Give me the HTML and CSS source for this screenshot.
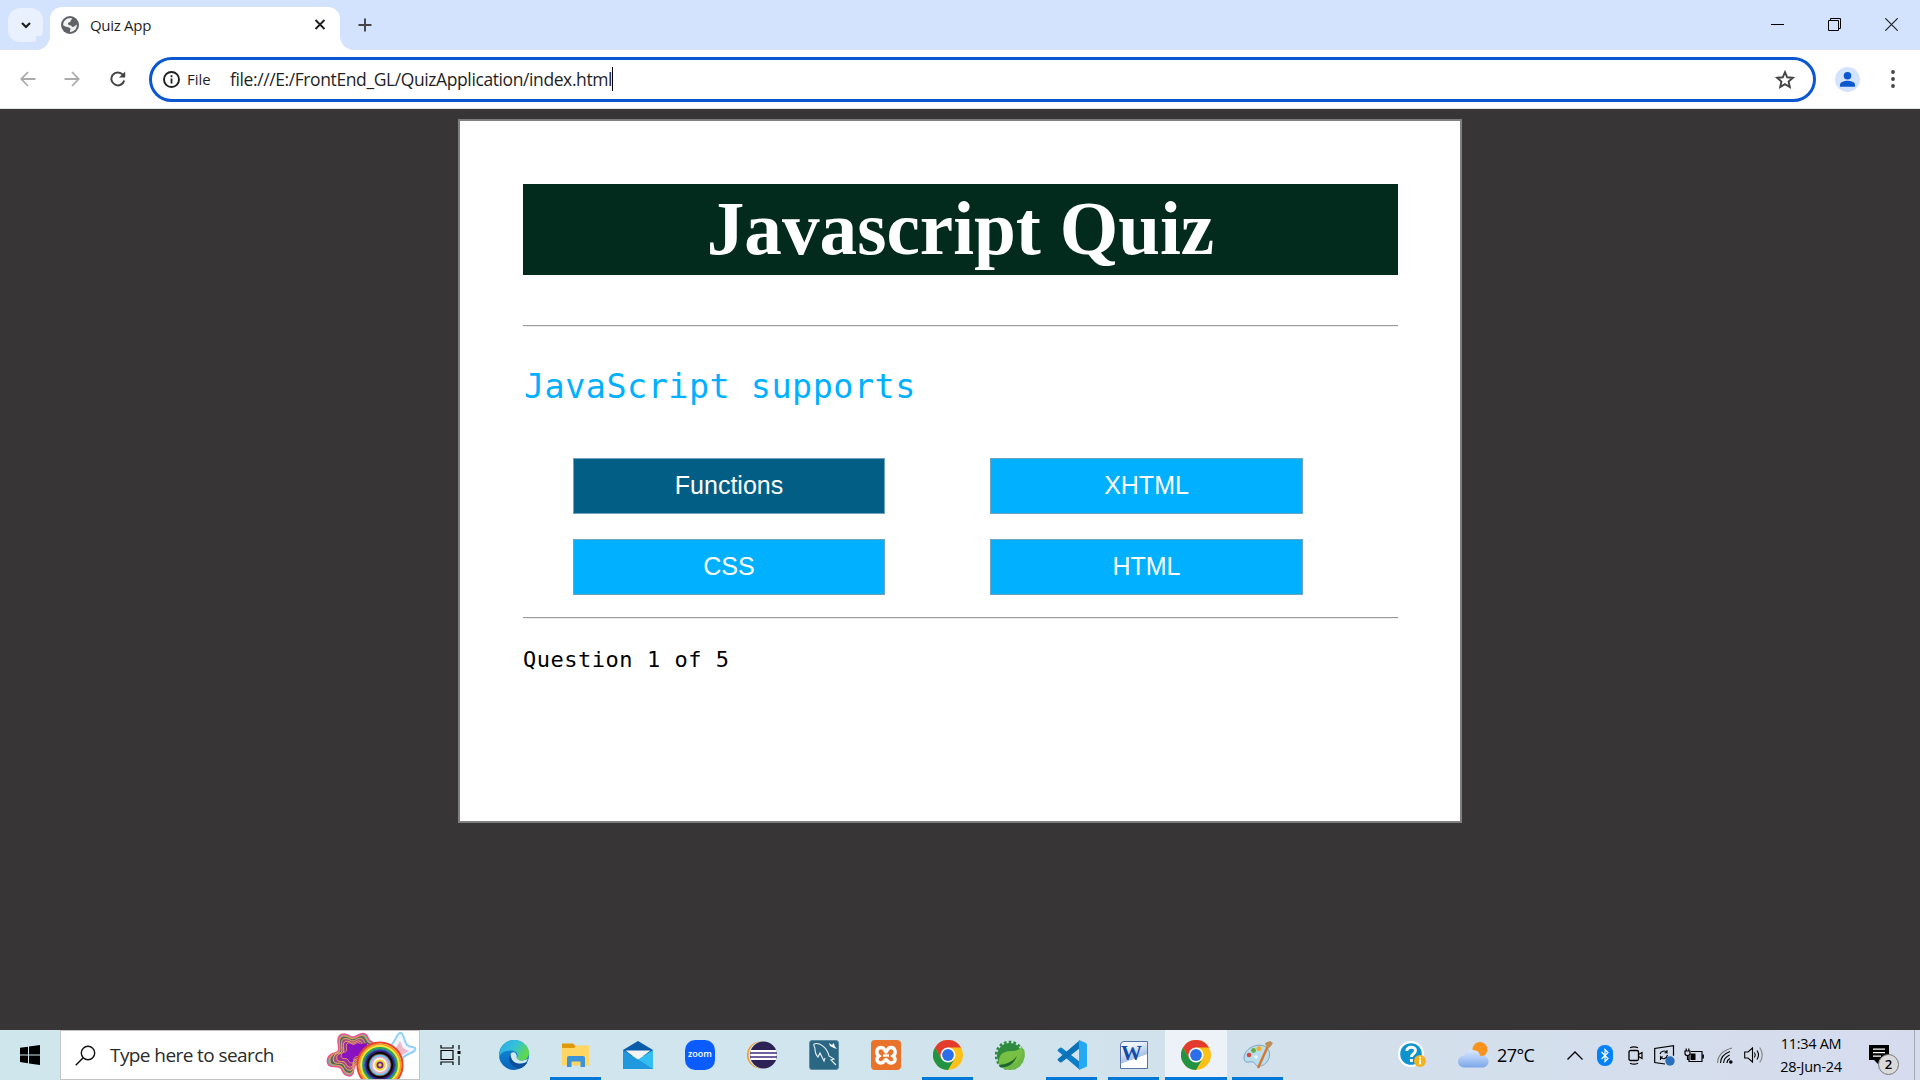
FILE: index.html
```html
<!DOCTYPE html>
<html lang="en">
<head>
<meta charset="utf-8">
<title>Quiz App</title>
<link rel="stylesheet" href="styles.css">
</head>
<body>
<svg class="defs" aria-hidden="true">
  <defs>
    <symbol id="chrome" viewBox="0 0 30 30">
      <circle cx="15" cy="15" r="15" fill="#fbc116"/>
      <path d="M2 7.500A15 15 0 0 1 28 7.500H15L8.500 18.750Z" fill="#e33b2e"/>
      <path d="M2 7.500A15 15 0 0 0 15 30L21.500 18.750H8.500Z" fill="#229342"/>
      <circle cx="15" cy="15" r="7.500" fill="#fff"/>
      <circle cx="15" cy="15" r="5.900" fill="#2b6fe8"/>
    </symbol>
    <path id="blob" d="M19 2C24 2 25 6 29 5S36 0 40 2 42 8 47 10 50 25 38 29 30 36 28 41 19 44 17 38 5 37 3 32 4 22 10 21 13 14 13 9 15 2 19 2Z"/>
    <linearGradient id="edgeA" x1="0" y1="0" x2="1" y2="0.500"><stop offset="0" stop-color="#2aa8e8"/><stop offset="0.550" stop-color="#35c1d8"/><stop offset="1" stop-color="#5fd84a"/></linearGradient>
    <linearGradient id="edgeB" x1="0" y1="0" x2="0" y2="1"><stop offset="0" stop-color="#1193e0"/><stop offset="1" stop-color="#0a63b8"/></linearGradient>
    <linearGradient id="cloud" x1="0" y1="0" x2="0" y2="1"><stop offset="0" stop-color="#d9e8ff"/><stop offset="1" stop-color="#7ba6ea"/></linearGradient>
  </defs>
</svg>

<header class="tabstrip">
  <div class="tab-search"><svg width="12" height="12" viewBox="0 0 12 12"><path d="M2 4l4 4 4-4" fill="none" stroke="#1f1f1f" stroke-width="2.200"/></svg></div>
  <div class="tab">
    <svg class="globe" width="18" height="18" viewBox="0 0 18 18"><circle cx="9" cy="9" r="9" fill="#5f6368"/><path d="M10.500 2c1 2-1 2-1 3.200S6.500 6 7 8s3 .6 3.600 2.300S14 10 15.800 8.500c.2 4.200-2.500 7.300-6.800 7.400-.6-1.400 1.300-2.300.2-3.700C8 11 5 11.300 2.200 9.200 1.900 5 5.500 1.600 10.500 2z" fill="#fff" opacity=".92"/></svg>
    <span class="tab-title">Quiz App</span>
    <svg class="tab-close" width="12" height="12" viewBox="0 0 12 12"><path d="M1.500 1l9 9m0-9l-9 9" stroke="#1f1f1f" stroke-width="1.900"/></svg>
  </div>
  <svg class="new-tab" width="14" height="14" viewBox="0 0 14 14"><path d="M7 .5v13M.5 7h13" stroke="#444" stroke-width="1.900"/></svg>
  <div class="win-controls">
    <svg width="13" height="13" viewBox="0 0 13 13"><path d="M0 6.500h13" stroke="#000"/></svg>
    <svg width="13" height="13" viewBox="0 0 13 13"><path d="M.5 2.500h10v10H.5zM2.500 2.500v-2h10v10h-2" fill="none" stroke="#000"/></svg>
    <svg width="13" height="13" viewBox="0 0 13 13"><path d="M.3.3l12.400 12.400M12.700.3L.3 12.700" stroke="#222" stroke-width="1.200"/></svg>
  </div>
</header>

<nav class="toolbar">
  <svg class="nav-back" width="16" height="16" viewBox="0 0 16 16"><path d="M15.500 8H1.800M8 1L1.300 8 8 15" fill="none" stroke="#ababab" stroke-width="1.800"/></svg>
  <svg class="nav-fwd" width="16" height="16" viewBox="0 0 16 16"><path d="M.5 8h13.700M8 1l6.700 7L8 15" fill="none" stroke="#ababab" stroke-width="1.800"/></svg>
  <svg class="nav-reload" width="16" height="16" viewBox="0 0 16 16"><path d="M14.200 9.500A6.500 6.500 0 1 1 12.800 3.600L14.500 5.600" fill="none" stroke="#444" stroke-width="2"/><path d="M15.200.4v6.200H9z" fill="#444"/></svg>
  <div class="omnibox">
    <svg width="17" height="17" viewBox="0 0 17 17"><circle cx="8.500" cy="8.500" r="7.500" fill="none" stroke="#1f1f1f" stroke-width="1.900"/><path d="M8.500 7.500v5M8.500 4.300v1.900" stroke="#1f1f1f" stroke-width="1.800"/></svg>
    <span class="scheme">File</span>
    <span class="url">file:///E:/FrontEnd_GL/QuizApplication/index.html</span>
    <i class="caret"></i>
    <svg class="star" width="20" height="19" viewBox="0 0 20 19"><path d="M10 2.200l2.200 5.100 5.600.5-4.200 3.700 1.200 5.500-4.800-2.900L5.200 17l1.200-5.500-4.200-3.700 5.600-.5z" fill="none" stroke="#444" stroke-width="1.900"/></svg>
  </div>
  <svg class="avatar" width="25" height="25" viewBox="0 0 25 25"><circle cx="12.500" cy="12.500" r="12.500" fill="#d3e3fd"/><circle cx="12.500" cy="8.700" r="3.800" fill="#0b57d0"/><path d="M5 19.800v-2.100c0-3 5-4 7.500-4s7.500 1 7.500 4v2.100z" fill="#0b57d0"/></svg>
  <svg class="menu" width="4" height="18" viewBox="0 0 4 18"><g fill="#444"><circle cx="2" cy="2" r="1.900"/><circle cx="2" cy="9" r="1.900"/><circle cx="2" cy="16" r="1.900"/></g></svg>
</nav>

<main class="page">
  <section class="quiz">
    <h1>Javascript Quiz</h1>
    <hr class="rule-top">
    <p class="question">JavaScript supports</p>
    <div class="options">
      <button class="hovered">Functions</button>
      <button>XHTML</button>
      <button>CSS</button>
      <button>HTML</button>
    </div>
    <hr class="rule-bottom">
    <p class="progress">Question 1 of 5</p>
  </section>
</main>

<footer class="taskbar">
  <div class="start"><svg width="20" height="20" viewBox="0 0 20 20"><path d="M0 2.800l8-1.100v7.700H0zM9 1.500L20 0v9.400H9zM0 10.400h8v7.800l-8-1.100zM9 10.400h11V20L9 18.400z"/></svg></div>
  <div class="search">
    <svg width="21" height="21" viewBox="0 0 21 21"><circle cx="13" cy="8" r="6.700" fill="none" stroke="#111" stroke-width="1.400"/><path d="M8.200 12.800L.7 20.300" stroke="#111" stroke-width="1.500"/></svg>
    <span>Type here to search</span>
    <svg class="search-art" width="92" height="47" viewBox="0 0 92 47">
      <use href="#blob" fill="#55b8b5" stroke="#f0508f" stroke-width="1.500"/>
      <use href="#blob" transform="translate(27 21) scale(.9) translate(-27 -21)" fill="#4c6b5e" stroke="#ec9a52" stroke-width="1.200"/>
      <use href="#blob" transform="translate(27 21) scale(.76) translate(-27 -21)" fill="#a84a86" stroke="#efb45c" stroke-width="1.300"/>
      <use href="#blob" transform="translate(27 21) scale(.62) translate(-27 -21)" fill="#9a2f9a" stroke="#efb45c" stroke-width="1.500"/>
      <use href="#blob" transform="translate(28 20) scale(.48) translate(-27 -21)" fill="#8a12c0" stroke="#efb45c" stroke-width="1.600"/>
      <path d="M30 13l12-2v7l-9 6-7-3z" fill="#8710bf"/>
      <path d="M75 1c4-1 4 9 7 12s10 1 8 5-9 3-12 8l-3 4-12-15c7-2 8-13 12-14z" fill="#f2f6ff" stroke="#8fd0fb" stroke-width="2"/>
      <path d="M75 9l3 7 6 3-7 4-8-4z" fill="#efb9cc"/>
      <g fill="none" stroke-width="2.200">
        <circle cx="55" cy="33" r="22.500" stroke="#e8432e"/><circle cx="55" cy="33" r="20.500" stroke="#f59b23"/><circle cx="55" cy="33" r="18.700" stroke="#f7e93b"/><circle cx="55" cy="33" r="16.800" stroke="#2fa04e"/>
      </g>
      <circle cx="55" cy="33" r="16" fill="#2456bd"/><circle cx="55" cy="33" r="14.600" fill="#3b1a6b"/><circle cx="55" cy="33" r="13" fill="#070707"/><circle cx="55" cy="33" r="11.300" fill="#7b4a2a"/><circle cx="55" cy="33" r="10.500" fill="#6ec5ef"/><circle cx="55" cy="33" r="8.800" fill="#f3a9c0"/><circle cx="55" cy="33" r="7.200" fill="#fff"/><circle cx="55" cy="33" r="5.700" fill="#f8d736"/><circle cx="55" cy="33" r="2.600" fill="#f8d736" stroke="#72258b" stroke-width="1.800"/>
    </svg>
  </div>
  <div class="taskview"><svg width="22" height="20" viewBox="0 0 22 20"><path d="M1 0v3h12V0M1 20v-3h12v3M1 5.500h12v9H1zM19 0v4.500M19 11v9" fill="none" stroke="#000" stroke-width="1.200"/><path d="M17.500 6h3v3h-3z"/></svg></div>
  <div class="apps">
    <div class="app"><svg width="30" height="30" viewBox="0 0 30 30"><circle cx="15" cy="15" r="15" fill="url(#edgeB)"/><path d="M1 11C3 4 9 0 15 0c9 0 15 6 15 13 0 5-4 7.500-8 7.500-4 0-5-1.500-4-3 2-3-1-7-6-7C7 10.500 2 12 .3 17 0 15 .2 13 1 11z" fill="url(#edgeA)"/><path d="M12 13c-5 7 1 16 10 15l4-2.800c2-1.600 2.500-3.500 1-2.800-8 3.500-15 .6-15-6.400z" fill="#0c4f9c"/><path d="M11.500 15c0-3 4.500-4 6 0 .8 2-.6 2.500.8 4 2.500 2.500 7 2 10.500-.5-1 3-2 4-3 4.300-8 3-14.300-1.800-14.300-7.800z" fill="#d3e7ee"/><path d="M12 14.500c-1 7 6 11.500 14.500 8.300q1.500-.3.500 1.200-2 2.500-5 4c-8 1-13-7-10-13.500z" fill="#0c4f9c"/></svg></div>
    <div class="app running"><svg width="28" height="26" viewBox="0 0 28 26"><path d="M0 1.500h11l3 3-2 3H0z" fill="#df9a07"/><path d="M0 6h12l2.500-2.500H27V23.500H0z" fill="#ffd563"/><path d="M5 25V16q0-2 2-2h14q2 0 2 2v9h-4.500v-5.500h-9V25z" fill="#3b94d9"/></svg></div>
    <div class="app"><svg width="30" height="28" viewBox="0 0 30 28"><path d="M0 9L15 0l15 9v6H0z" fill="#0a5ba8"/><path d="M2.500 9.500h25L15 19z" fill="#f4f4f4"/><path d="M30 9v19H0z" fill="#34bdf0"/><path d="M0 28V9l30 19z" fill="#2098de"/></svg></div>
    <div class="app"><div class="zoom-logo">zoom</div></div>
    <div class="app"><svg width="30" height="28" viewBox="0 0 30 28"><circle cx="13.500" cy="14" r="13.500" fill="#f7941e"/><circle cx="15" cy="14" r="13.500" fill="#d6e6ee"/><circle cx="16.500" cy="14" r="13.500" fill="#2c2255"/><path d="M3.500 10h26M3.300 14h26.500M3.500 18h26" stroke="#fff" stroke-width="2"/><path d="M3.500 12h26M3.500 16h26" stroke="#8277b5" stroke-width="1.600"/></svg></div>
    <div class="app"><svg width="30" height="30" viewBox="0 0 30 30"><rect x=".5" y=".5" width="29" height="29" rx="2.500" fill="#2b6783" stroke="#5b8ca1"/><path d="M5 4c5-2 13 3 15 12l5 3-3 1 5 5M5 4c-1 1 1 3 1 5s1 6 3 8l2-4 4 8 1-3" fill="none" stroke="#e9f2f5" stroke-width="1.100"/><path d="M20 3l3 2 2-2 .5 3 2.500 3-3-1-4-2z" fill="#fff"/></svg></div>
    <div class="app"><svg width="30" height="30" viewBox="0 0 30 30"><rect width="30" height="30" rx="4" fill="#e9732a"/><path d="M8 16c-4-3-2-8.500 2-8.500s4 4.500 5 4.500 1-4.500 5-4.500 6 5.500 2 8.500c4 3 1.500 7-2 7s-4-3.500-5-3.500-1.500 3.500-5 3.500-6-4-2-7z" fill="none" stroke="#fff" stroke-width="3.400"/><path d="M12 15.500h6" stroke="#fff" stroke-width="2.500"/></svg></div>
    <div class="app running"><svg width="30" height="30"><use href="#chrome"/></svg></div>
    <div class="app"><svg width="30" height="30" viewBox="0 0 30 30"><circle cx="14.500" cy="15.500" r="12.500" fill="#2e8b3d"/><circle cx="14.500" cy="15.500" r="13.500" fill="none" stroke="#2e8b3d" stroke-width="2.600" stroke-dasharray="2.600 2.200"/><path d="M29 9c3 11-4 21-14 21-6 0-10-3-12-7z" fill="#6db745"/><path d="M4 24c-1-9 4-13 12-13 6 0 8-1 11-5 2 11-4 19-14 18-3 0-4-1-5-2l-3 3z" fill="#78c043"/><path d="M4 25c9-1 14-4 18-9-3 8-9 12-17 11z" fill="#1c6530"/></svg></div>
    <div class="app running"><svg width="30" height="30" viewBox="0 0 30 30"><path d="M1 9.500L3 7.800q1-.6 2 .1L23 22v8L.8 11q-.7-.8.200-1.500z" fill="#0a7dc8"/><path d="M1 20.500l2 1.700q1 .6 2-.1L23 8V0L.8 19q-.7.800.200 1.500z" fill="#0c72b8"/><path d="M22 0l7 3q1 .5 1 1.500v21q0 1-1 1.500l-7 3z" fill="#25a9f2"/></svg></div>
    <div class="app running"><div class="word-logo"><b>W</b></div></div>
    <div class="app running active"><svg width="30" height="30"><use href="#chrome"/></svg></div>
    <div class="app running"><svg width="30" height="30" viewBox="0 0 30 30"><path d="M1 17C2 8 15 2 23 7c7 5 3 18-6 19-5 1-4-3-7-4-4-1-9 3-9-5z" fill="#b9dcee" stroke="#7ba6bd"/><circle cx="6" cy="15" r="2.300" fill="#d9473c"/><circle cx="10.500" cy="10.500" r="2.400" fill="#68ae3c"/><circle cx="16" cy="8.500" r="2.500" fill="#f2b32c"/><circle cx="13" cy="17" r="1.800" fill="#eef6fa"/><path d="M25 6L15 28" stroke="#d8762b" stroke-width="2.400"/><path d="M23 6l-1-3 5-2 3 2-2 3-2 2z" fill="#bd8f5a"/></svg></div>
  </div>
  <div class="tray">
    <svg class="help" width="28" height="28" viewBox="0 0 28 28"><circle cx="13" cy="13" r="13" fill="#fff"/><circle cx="13" cy="13" r="10.800" fill="#0f93cf"/><path d="M8.800 10c0-5 8.700-5 8.700-.5 0 3-4 3.200-4 6.500M13.400 18v3" fill="none" stroke="#fff" stroke-width="2.900"/><circle cx="22" cy="20" r="6" fill="#f6b21b"/><path d="M22 18.500v5M22 15.800v1.800" stroke="#fff" stroke-width="1.900"/></svg>
    <svg class="weather" width="31" height="26" viewBox="0 0 31 26"><circle cx="22" cy="7.500" r="7.500" fill="#f7931e"/><path d="M6 25.500a6 6 0 0 1 0-12c1 0 1-5.500 8-5.500s8 4 8 6c5-1 8.500 2 8.500 5.500s-3 6-6 6z" fill="url(#cloud)"/></svg>
    <span class="temp">27°C</span>
    <svg class="up" width="16" height="9" viewBox="0 0 16 9"><path d="M.5 8.500L8 1l7.500 7.500" fill="none" stroke="#000" stroke-width="1.300"/></svg>
    <svg class="bt" width="16" height="21" viewBox="0 0 16 21"><rect width="16" height="21" rx="7.500" fill="#0082fc"/><path d="M4.500 7l6.500 6.500-3 3V4.500l3 3L4.500 14" fill="none" stroke="#fff" stroke-width="1.200"/></svg>
    <svg class="meet" width="15" height="19" viewBox="0 0 15 19"><rect x="1" y="4.500" width="9.500" height="10" rx="1.500" fill="none" stroke="#000" stroke-width="1.300"/><path d="M10.500 8.500l3.500-2v6l-3.500-2M2 1.800q4-2 8 0M2 17.200q4 2 8 0" fill="none" stroke="#000" stroke-width="1.200"/></svg>
    <svg class="sync" width="21" height="21" viewBox="0 0 21 21"><path d="M11 19L.7 17.500v-14L19.500.7v10" fill="none" stroke="#000" stroke-width="1.200"/><path d="M6 9c1-3 5-4 7-1.500V5m0 2.800h-2.500M13.500 10c-1 4-5 5-7 2v3m0-3H9" fill="none" stroke="#000" stroke-width="1.100"/><circle cx="16" cy="16" r="4.700" fill="#2a6fba"/></svg>
    <svg class="battery" width="20" height="15" viewBox="0 0 20 15"><path d="M7 3.500h11v10H5V8M19.300 6.500v4M1 3h5v2.500q0 2-2.500 2T1 5.500zM2.200 3V.5M4.800 3V.5M3.500 7.500v4H5" fill="none" stroke="#000" stroke-width="1.200"/><path d="M6.500 5.500h5v6.500h-5z"/></svg>
    <svg class="wifi" width="16" height="17" viewBox="0 0 16 17"><g fill="none" stroke="#000" stroke-width="1.100"><path d="M10 16q0-3 3-4.500M6.600 16q0-5 6-8M3.500 16q0-8 9.500-11.500"/><path d="M.6 16Q.6 5 15 1" stroke="#777"/></g><circle cx="13.800" cy="15" r="1.800"/></svg>
    <svg class="sound" width="20" height="18" viewBox="0 0 20 18"><path d="M.7 6H4l4.500-4v14L4 12H.7z" fill="none" stroke="#000" stroke-width="1.100"/><path d="M10.500 6.500q1.500 2.500 0 5M13 4.500q3 4.500 0 9" fill="none" stroke="#000" stroke-width="1.100"/><path d="M15.700 1.500q5 7.500 0 15" fill="none" stroke="#888" stroke-width="1.200"/></svg>
    <div class="clock"><span class="time">11:34 AM</span><span class="date">28-Jun-24</span></div>
    <div class="notify"><svg width="20" height="20" viewBox="0 0 20 20"><path d="M0 0h20v15H10v5l-5-5H0z"/><path d="M4 4.200h12M4 7.700h12M4 11.200h8" stroke="#fff" stroke-width="1.300"/></svg><b>2</b></div>
    <i class="peek"></i>
  </div>
</footer>
</body>
</html>
```
FILE: styles.css
```css
* { box-sizing: border-box; }

body {
  margin: 0;
  width: 1920px;
  height: 1080px;
  display: flex;
  flex-direction: column;
  overflow: hidden;
  background: #383536;
  font-family: "Open Sans", "Noto Sans", sans-serif;
}

svg { display: block; flex: none; }
.defs { position: absolute; width: 0; height: 0; }

/* Tab strip */
.tabstrip {
  height: 50px;
  flex: none;
  display: flex;
  align-items: center;
  padding-left: 8px;
  background: #d3e2fd;
}

.tab-search {
  width: 35px;
  height: 34px;
  display: grid;
  place-items: center;
  border-radius: 12px;
  background: #e9f0fe;
}

.tab {
  position: relative;
  width: 290px;
  height: 43px;
  margin: 7px 0 0 7px;
  padding: 0 14px 7px 11px;
  display: flex;
  align-items: center;
  border-radius: 12px 12px 0 0;
  background: #fff;
}

.tab::before,
.tab::after {
  content: "";
  position: absolute;
  bottom: 0;
  width: 14px;
  height: 14px;
}

.tab::before {
  left: -14px;
  background: radial-gradient(circle at 0 0, #d3e2fd 13.5px, #fff 14.5px);
}

.tab::after {
  right: -14px;
  background: radial-gradient(circle at 100% 0, #d3e2fd 13.5px, #fff 14.5px);
}

.tab-title {
  margin-left: 11px;
  font-size: 15px;
  letter-spacing: -0.3px;
  color: #1f1f1f;
}

.tab-close { margin-left: auto; }
.new-tab { margin-left: 18px; }

.win-controls {
  margin: 0 22px 1px auto;
  display: flex;
  gap: 44px;
}

/* Toolbar */
.toolbar {
  height: 59px;
  flex: none;
  display: flex;
  align-items: center;
  padding-left: 20px;
  border-bottom: 1px solid #dfe6e6;
  background: linear-gradient(#fff, #fff), #d3e2fd;
}

.nav-fwd { margin-left: 28px; }
.nav-reload { margin-left: 30px; }

.omnibox {
  width: 1667px;
  height: 45px;
  margin-left: 23px;
  padding: 0 18px 0 11px;
  display: flex;
  align-items: center;
  border: 3px solid #0b57d0;
  border-radius: 23px;
  color: #1f1f1f;
}

.scheme {
  width: 43px;
  margin-left: 7px;
  font-size: 15px;
  letter-spacing: 0;
  white-space: nowrap;
}

.url {
  font-size: 17.5px;
  letter-spacing: -0.4px;
  white-space: nowrap;
}

.caret {
  width: 1px;
  height: 24px;
  background: #000;
}

.star { margin-left: auto; }
.avatar { margin-left: 19px; }
.menu { margin-left: 31px; }

/* Quiz page */
.page {
  flex: 1;
  display: flex;
  justify-content: center;
  align-items: flex-start;
  padding-top: 10px;
}

.quiz {
  width: 1004px;
  height: 704px;
  padding: 63px 62px 0 63px;
  border: 2px solid #808080;
  background: #fff;
}

.quiz h1 {
  height: 91px;
  margin: 0;
  background: #022b1d;
  color: #fff;
  font: bold 75.2px/90px "Liberation Serif", serif;
  text-align: center;
}

.quiz hr {
  height: 2px;
  margin: 0;
  border: 0;
  border-top: 1px solid #9a9a9a;
  border-bottom: 1px solid #eee;
}

.quiz .rule-top { margin-top: 50px; }

.question {
  height: 50px;
  margin: 35px 0 0 1px;
  color: #01b0ff;
  font: 33.5px/50px "DejaVu Sans Mono", monospace;
  letter-spacing: 0.45px;
}

.options {
  display: grid;
  grid-template-columns: 312px 313px;
  grid-auto-rows: 56px;
  gap: 25px 105px;
  margin: 46px 0 0 50px;
}

.options button {
  padding: 0 0 2px;
  border: 1px solid #6fa3c0;
  background: #01b0ff;
  color: #fff;
  font: 25px "Liberation Sans", sans-serif;
}

.options .hovered { background: #035e85; }

.quiz .rule-bottom { margin-top: 22px; }

.progress {
  margin: 25px 0 0;
  color: #000;
  font: 22px/32px "DejaVu Sans Mono", monospace;
  letter-spacing: 0.52px;
}

/* Taskbar */
.taskbar {
  height: 50px;
  flex: none;
  display: flex;
  align-items: stretch;
  background: linear-gradient(90deg, #d0e6ed 0, #d0e5ed 800px, #d2e2ec 1200px, #d4deec 1600px, #d6dcee 1920px);
}

.start {
  width: 60px;
  display: grid;
  place-items: center;
}

.search {
  position: relative;
  width: 360px;
  padding-left: 14px;
  display: flex;
  align-items: center;
  border: 1px solid #c3c5c7;
  background: #fff;
}

.search span {
  margin-left: 14px;
  color: #2b2b2b;
  font-size: 19px;
  letter-spacing: -0.58px;
  white-space: nowrap;
}

.search-art {
  position: absolute;
  right: 2px;
  bottom: 0;
}

.taskview {
  width: 61px;
  display: grid;
  place-items: center;
}

.apps {
  display: flex;
  padding-left: 2px;
}

.app {
  position: relative;
  width: 62px;
  display: grid;
  place-items: center;
}

.running::after {
  content: "";
  position: absolute;
  left: 5px;
  right: 6px;
  bottom: 0;
  height: 3px;
  background: #0078d7;
}

.active { background: #edf1f8; }

.active::after {
  left: 0;
  right: 0;
}

.zoom-logo {
  width: 30px;
  height: 30px;
  border-radius: 10px;
  background: #0b5cff;
  color: #fff;
  font: 600 9px/28px "Open Sans", sans-serif;
  text-align: center;
}

.word-logo {
  width: 28px;
  height: 28px;
  border: 1px solid #5472a8;
  border-radius: 4px 0 0 0;
  background: linear-gradient(160deg, #eef4fc 20%, #a9c1e6 60%, #fff 62%);
  color: #124ba6;
  font: 900 21px/23px "Liberation Serif", serif;
}

.tray {
  margin-left: auto;
  display: flex;
  align-items: center;
}

.help { margin-right: 1px; }
.weather { margin-left: 31px; }

.temp {
  width: 39px;
  margin-left: 8px;
  font-size: 18px;
  letter-spacing: -0.6px;
  white-space: nowrap;
}

.up { margin-left: 31px; }
.bt { margin-left: 14px; }
.meet { margin-left: 15px; }
.sync { margin-left: 11px; }
.battery { margin-left: 9px; }
.wifi { margin-left: 13px; }
.sound { margin-left: 11px; }

.clock {
  width: 66px;
  margin-left: 14px;
  display: flex;
  flex-direction: column;
  align-items: center;
  font-size: 14.5px;
  line-height: 23px;
  letter-spacing: -0.3px;
  white-space: nowrap;
}

.notify {
  position: relative;
  margin-left: 25px;
}

.notify b {
  position: absolute;
  left: 9px;
  top: 9px;
  width: 21px;
  height: 21px;
  border: 1px solid #777;
  border-radius: 50%;
  background: #dadada;
  font: 600 13px/19px "Open Sans", sans-serif;
  text-align: center;
}

.peek {
  width: 6px;
  margin-left: 25px;
  align-self: stretch;
  border-left: 1px solid #a3a9b3;
}
```
